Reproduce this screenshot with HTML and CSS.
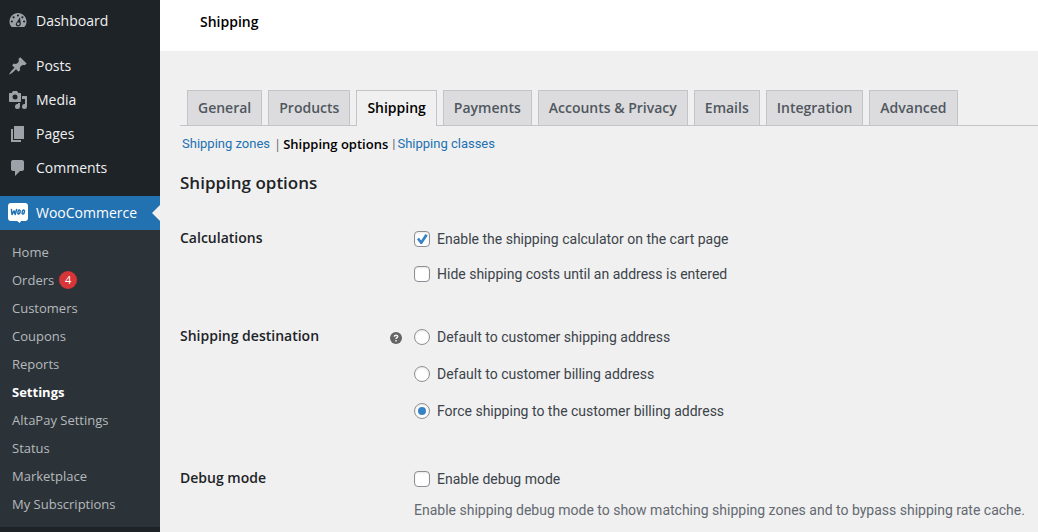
FILE: index.html
```html
<!DOCTYPE html>
<html lang="en">
<head>
<meta charset="utf-8">
<meta name="viewport" content="width=device-width, initial-scale=1">
<title>Shipping</title>
<link rel="stylesheet" href="styles.css">
</head>
<body>
<div class="admin">
  <nav class="sidebar" aria-label="Main menu">
    <ul class="menu">
      <li><a class="menu-link" href="#"><svg class="icon" viewBox="0 0 20 20" aria-hidden="true"><path fill-rule="evenodd" d="M3.8 16h12.4c1.4-1.400 2.300-3 2.300-5.300 0-5-3.800-8.700-8.500-8.700S1.500 5.700 1.500 10.700c0 2.300.9 3.900 2.300 5.300zM10 3.400a1.100 1.100 0 1 1 0 2.200 1.100 1.100 0 0 1 0-2.200zM5.600 5.200a1.100 1.100 0 1 1 0 2.200 1.100 1.100 0 0 1 0-2.200zM14.400 5.200a1.100 1.100 0 1 1 0 2.200 1.100 1.100 0 0 1 0-2.200zM3.900 9.400a1.100 1.100 0 1 1 0 2.200 1.100 1.100 0 0 1 0-2.200zM16.100 9.400a1.100 1.100 0 1 1 0 2.200 1.100 1.100 0 0 1 0-2.200zM12 6.200l.8 6.600c.2 1.500-1 2.600-2.600 2.600-1.800 0-3-1.400-2.300-3z"/><circle cx="10.300" cy="12.800" r="1.400"/></svg>Dashboard</a></li>
      <li class="gap"><a class="menu-link" href="#"><svg class="icon" viewBox="0 0 20 20" aria-hidden="true"><path d="M10.440 3.020l1.820-1.820 6.360 6.350-1.830 1.820c-1.050-.68-2.480-.57-3.410.36l-.75.75c-.92.93-1.040 2.350-.35 3.410l-1.830 1.820-2.410-2.410-2.800 2.790c-.42.42-3.380 2.710-3.800 2.290s1.860-3.390 2.280-3.810l2.790-2.790L4.100 9.360l1.830-1.820c1.050.69 2.480.57 3.400-.36l.75-.75c.93-.92 1.050-2.350.36-3.410z"/></svg>Posts</a></li>
      <li><a class="menu-link" href="#"><svg class="icon" viewBox="0 0 20 20" aria-hidden="true"><path fill-rule="evenodd" d="M13 11V4c0-.55-.45-1-1-1h-1.670L9 1H5L3.670 3H2c-.55 0-1 .45-1 1v7c0 .55.45 1 1 1h10c.55 0 1-.45 1-1zM7 4.500a2.500 2.500 0 1 1 0 5 2.500 2.500 0 0 1 0-5zM14 6h5v10.500a2.500 2.500 0 1 1-2-2.450V9h-3zM10 14.050V13h2v3.500a2.500 2.500 0 1 1-2-2.450z"/></svg>Media</a></li>
      <li><a class="menu-link" href="#"><svg class="icon" viewBox="0 0 20 20" aria-hidden="true"><path d="M6 15V2h10v13zM5 16h8v2H3V5h2z"/></svg>Pages</a></li>
      <li><a class="menu-link" href="#"><svg class="icon" viewBox="0 0 20 20" aria-hidden="true"><path d="M5 2h9c1.100 0 2 .9 2 2v7c0 1.100-.9 2-2 2h-2l-5 5v-5H5c-1.100 0-2-.9-2-2V4c0-1.100.9-2 2-2z"/></svg>Comments</a></li>
      <li class="gap"><a class="menu-link current" href="#"><svg class="icon" viewBox="0 0 20 20" aria-hidden="true"><path d="M3 0h14a3 3 0 0 1 3 3v12a3 3 0 0 1-3 3h-4l-1.200 2-2.800-2H3a3 3 0 0 1-3-3V3a3 3 0 0 1 3-3z"/><g class="woo-mark"><path d="M3.400 6.500l.6 5 2.100-3.600 1.100 3.600 1.400-5"/><ellipse cx="11" cy="9" rx="1.100" ry="2" transform="rotate(15 11 9)"/><ellipse cx="15.300" cy="9" rx="1.100" ry="2" transform="rotate(15 15.300 9)"/></g></svg>WooCommerce</a>
        <ul class="submenu">
          <li><a href="#">Home</a></li>
          <li><a href="#">Orders <span class="count">4</span></a></li>
          <li><a href="#">Customers</a></li>
          <li><a href="#">Coupons</a></li>
          <li><a href="#">Reports</a></li>
          <li><a class="active" href="#">Settings</a></li>
          <li><a href="#">AltaPay Settings</a></li>
          <li><a href="#">Status</a></li>
          <li><a href="#">Marketplace</a></li>
          <li><a href="#">My Subscriptions</a></li>
        </ul>
      </li>
    </ul>
  </nav>
  <div class="page">
    <header class="topbar"><h1>Shipping</h1></header>
    <main class="content">
      <nav class="tabs" aria-label="Settings">
        <a href="#">General</a>
        <a href="#">Products</a>
        <a class="active" href="#">Shipping</a>
        <a href="#">Payments</a>
        <a href="#">Accounts &amp; Privacy</a>
        <a href="#">Emails</a>
        <a href="#">Integration</a>
        <a href="#">Advanced</a>
      </nav>
      <ul class="sections">
        <li><a href="#">Shipping zones</a></li>
        <li><a class="active" href="#">Shipping options</a></li>
        <li><a href="#">Shipping classes</a></li>
      </ul>
      <h2>Shipping options</h2>
      <form class="settings">
        <div class="row" role="group" aria-labelledby="calc">
          <h3 id="calc">Calculations</h3>
          <div class="fields checks">
            <label><input type="checkbox" checked>Enable the shipping calculator on the cart page</label>
            <label><input type="checkbox">Hide shipping costs until an address is entered</label>
          </div>
        </div>
        <div class="row" role="radiogroup" aria-labelledby="dest">
          <h3 id="dest">Shipping destination</h3>
          <svg class="help" viewBox="0 0 12 12" aria-hidden="true"><circle cx="6" cy="6" r="6"/><path d="M4.300 4.800Q4.300 3.200 6 3.200T7.700 4.600C7.700 5.700 6 5.700 6 7"/><path d="M6 8.100v1.500"/></svg>
          <div class="fields radios">
            <label><input type="radio" name="destination">Default to customer shipping address</label>
            <label><input type="radio" name="destination">Default to customer billing address</label>
            <label><input type="radio" name="destination" checked>Force shipping to the customer billing address</label>
          </div>
        </div>
        <div class="row" role="group" aria-labelledby="debug">
          <h3 id="debug">Debug mode</h3>
          <div class="fields">
            <label><input type="checkbox" aria-describedby="debug-note">Enable debug mode</label>
            <p id="debug-note">Enable shipping debug mode to show matching shipping zones and to bypass shipping rate cache.</p>
          </div>
        </div>
      </form>
    </main>
  </div>
</div>
</body>
</html>
```
FILE: styles.css
```css
* { box-sizing: border-box; }
body {
  margin: 0;
  background: #f0f0f0;
  color: #3c434a;
  font: 14px/20px "Open Sans", "Noto Sans", sans-serif;
}
h1, h2, h3, p, ul { margin: 0; padding: 0; }
ul { list-style: none; }
a { text-decoration: none; }

.admin { display: flex; min-height: 100vh; }
.sidebar { flex: 0 0 160px; padding-top: 4px; background: #1d2327; }
.gap { margin-top: 11px; }
.menu-link {
  position: relative;
  display: flex;
  align-items: center;
  gap: 8px;
  height: 34px;
  padding-left: 8px;
  color: #f0f0f1;
}
.icon { width: 20px; height: 20px; fill: #9ca2a7; }
.current { background: #2271b1; color: #fff; }
.current .icon { fill: #fff; }
.current::after {
  content: "";
  position: absolute;
  right: 0;
  top: 9px;
  border: 8px solid transparent;
  border-right-color: #f0f0f0;
  border-left: 0;
}
.woo-mark { fill: none; stroke: #2271b1; stroke-width: 1.5; stroke-linejoin: round; stroke-linecap: round; }
.submenu { padding: 8px 0 9px; background: #2c3338; font-size: 13px; }
.submenu a { display: flex; align-items: center; gap: 5px; height: 28px; padding-left: 12px; color: #b5b9bd; }
.submenu .active { color: #fff; font-weight: 700; }
.count {
  width: 18px;
  border-radius: 9px;
  background: #d63638;
  color: #fff;
  font-size: 11px;
  line-height: 18px;
  text-align: center;
}

.page { flex: 1; min-width: 0; }
.topbar { padding: 12px 40px 19px; background: #fff; color: #000; }
h1 { font-size: 14px; line-height: 20px; font-weight: 600; }
.content { padding: 39px 0 0 20px; }
.tabs { display: flex; gap: 6px; padding-left: 7px; border-bottom: 1px solid #c3c4c7; }
.tabs a {
  padding: 5px 10px;
  border: 1px solid #c3c4c7;
  border-bottom: 0;
  background: #dcdcde;
  color: #50575e;
  font-weight: 600;
  line-height: 24px;
  white-space: nowrap;
}
.tabs .active { margin-bottom: -1px; padding-bottom: 6px; background: #f0f0f0; color: #000; }
.sections { display: flex; gap: 4px; padding: 8px 2px; font-size: 13px; }
.sections a { color: #2271b1; }
.sections .active { color: #000; font-weight: 600; }
.sections li:not(:has(.active)) { font-family: Roboto, "Open Sans", sans-serif; }
.sections li + li::before { content: "|"; margin-right: 2px; color: #646970; }
h2 { padding-top: 9px; color: #1d2327; font-size: 17px; line-height: 24px; font-weight: 600; }
.settings { display: grid; gap: 42px; padding-top: 33px; }
.row { display: grid; grid-template-columns: 210px 24px 1fr; }
h3 { color: #1d2327; font-size: 14px; line-height: 20px; font-weight: 600; }
.fields { grid-column: 3; display: grid; gap: 11px; padding-top: 1px; font-family: Roboto, "Open Sans", sans-serif; }
.checks { gap: 15px; }
.radios { gap: 17px; padding-bottom: 5px; }
.settings label { display: flex; align-items: center; gap: 7px; }
.help { width: 12px; height: 12px; margin-top: 6px; fill: #646464; }
.help path { fill: none; stroke: #f0f0f0; stroke-width: 1.5; }
input {
  appearance: none;
  flex: none;
  display: grid;
  place-items: center;
  width: 16px;
  height: 16px;
  margin: 0;
  border: 1px solid #8c8f94;
  border-radius: 4px;
  background: #fff;
  box-shadow: inset 0 1px 2px rgba(0, 0, 0, .1);
}
input[type="radio"] { border-radius: 50%; }
input[type="radio"]:checked::before { content: ""; width: 8px; height: 8px; border-radius: 50%; background: #3582c4; }
input[type="checkbox"]:checked::before {
  content: "";
  width: 12px;
  height: 12px;
  background: #3582c4;
  clip-path: polygon(8% 52%, 25% 40%, 43% 62%, 78% 8%, 98% 20%, 50% 92%, 38% 92%);
}
.settings p { color: #646970; }
```
